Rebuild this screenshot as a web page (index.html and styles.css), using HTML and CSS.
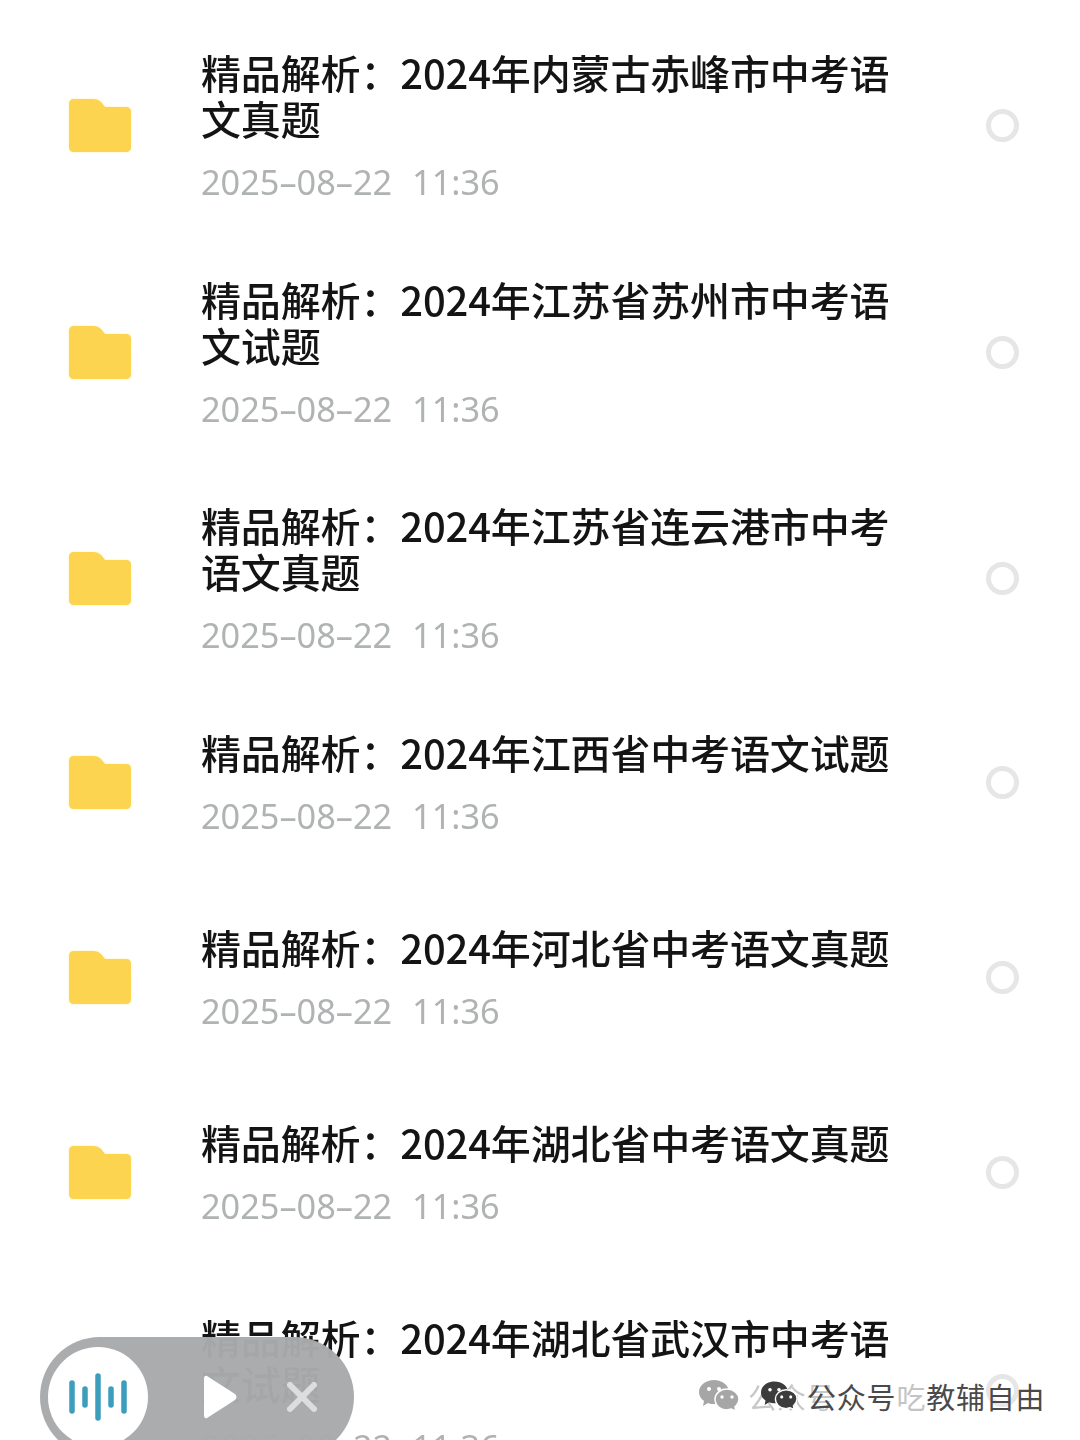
FILE: index.html
```html
<!DOCTYPE html>
<html lang="zh-CN">
<head>
  <meta charset="UTF-8">
  <title>文件列表</title>
  <link rel="stylesheet" href="styles.css">
</head>
<body>
  <svg class="defs" width="0" height="0" aria-hidden="true">
    <symbol id="folder" viewBox="0 0 62 53">
      <path d="M5 0H25Q29 0 32 3L36 8H57Q62 8 62 13V48Q62 53 57 53H5Q0 53 0 48V5Q0 0 5 0Z"/>
    </symbol>
    <symbol id="wechat" viewBox="0 0 40 32">
      <path class="bubble-back" d="M15 0C23 0 30 5 30 12C30 19 23 24 15 24C13 24 11 24 9 23L4 26L5 21C2 19 0 16 0 12C0 5 7 0 15 0Z"/>
      <path class="bubble-front" d="M28 9C35 9 40 14 40 19C40 22 38 25 36 27L37 31L32 29C31 29 29 30 28 30C21 30 16 25 16 19C16 14 21 9 28 9Z"/>
      <circle class="eye" cx="10" cy="9" r="2"/>
      <circle class="eye" cx="20" cy="9" r="2"/>
      <circle class="eye" cx="23" cy="17" r="1.7"/>
      <circle class="eye" cx="33" cy="17" r="1.7"/>
    </symbol>
  </svg>

  <main class="file-list">
    <div class="file-row">
      <svg class="folder-icon"><use href="#folder"/></svg>
      <div class="file-info">
        <div class="file-title">精品解析：2024年内蒙古赤峰市中考语文真题</div>
        <div class="file-date">2025–08–22  11:36</div>
      </div>
      <span class="radio"></span>
    </div>
    <div class="file-row">
      <svg class="folder-icon"><use href="#folder"/></svg>
      <div class="file-info">
        <div class="file-title">精品解析：2024年江苏省苏州市中考语文试题</div>
        <div class="file-date">2025–08–22  11:36</div>
      </div>
      <span class="radio"></span>
    </div>
    <div class="file-row">
      <svg class="folder-icon"><use href="#folder"/></svg>
      <div class="file-info">
        <div class="file-title">精品解析：2024年江苏省连云港市中考语文真题</div>
        <div class="file-date">2025–08–22  11:36</div>
      </div>
      <span class="radio"></span>
    </div>
    <div class="file-row single">
      <svg class="folder-icon"><use href="#folder"/></svg>
      <div class="file-info">
        <div class="file-title">精品解析：2024年江西省中考语文试题</div>
        <div class="file-date">2025–08–22  11:36</div>
      </div>
      <span class="radio"></span>
    </div>
    <div class="file-row single">
      <svg class="folder-icon"><use href="#folder"/></svg>
      <div class="file-info">
        <div class="file-title">精品解析：2024年河北省中考语文真题</div>
        <div class="file-date">2025–08–22  11:36</div>
      </div>
      <span class="radio"></span>
    </div>
    <div class="file-row single">
      <svg class="folder-icon"><use href="#folder"/></svg>
      <div class="file-info">
        <div class="file-title">精品解析：2024年湖北省中考语文真题</div>
        <div class="file-date">2025–08–22  11:36</div>
      </div>
      <span class="radio"></span>
    </div>
    <div class="file-row">
      <svg class="folder-icon"><use href="#folder"/></svg>
      <div class="file-info">
        <div class="file-title">精品解析：2024年湖北省武汉市中考语文试题</div>
        <div class="file-date">2025–08–22  11:36</div>
      </div>
      <span class="radio"></span>
    </div>
  </main>

  <!-- 悬浮播放器 -->
  <div class="player">
    <div class="player-disc">
      <svg class="wave" width="60" height="48" viewBox="0 0 60 48">
        <line x1="4" y1="10" x2="4" y2="38"/>
        <line x1="17" y1="16" x2="17" y2="32"/>
        <line x1="30" y1="3" x2="30" y2="45"/>
        <line x1="43" y1="16" x2="43" y2="32"/>
        <line x1="56" y1="10" x2="56" y2="38"/>
      </svg>
    </div>
    <svg class="play" width="33" height="44" viewBox="0 0 33 44">
      <path d="M3 1Q0 0 0 4V40Q0 44 3 43L31 25Q34 22 31 19Z"/>
    </svg>
    <svg class="close" width="30" height="30" viewBox="0 0 30 30">
      <line x1="3" y1="3" x2="27" y2="27"/>
      <line x1="27" y1="3" x2="3" y2="27"/>
    </svg>
  </div>

  <!-- 水印 -->
  <div class="watermark ghost">
    <svg class="wm-icon"><use href="#wechat"/></svg>
    <span class="ghost-text">公众号</span>
  </div>
  <div class="watermark main-mark">
    <svg class="wm-icon"><use href="#wechat"/></svg>
    <span>公众号<i class="faint">吃</i>教辅自由</span>
  </div>
</body>
</html>
```

FILE: styles.css
```css
* {
  box-sizing: border-box;
}

html, body {
  margin: 0;
  height: 1440px;
  overflow: hidden;
  background: #fff;
}

body {
  position: relative;
  font-family: "Noto Sans CJK SC", "Noto Sans", sans-serif;
}

.defs {
  position: absolute;
}

.file-list {
  padding: 49px 0 0 69px;
  filter: blur(0.5px);
}

.file-row {
  display: flex;
  align-items: center;
  margin-bottom: 73.67px;
}

.file-row.single {
  margin-bottom: 88px;
}

.folder-icon {
  flex: none;
  width: 62px;
  height: 53px;
  fill: #fdd44f;
  filter: drop-shadow(0 0 1px #fff0b0);
}

.file-info {
  flex: none;
  width: 700px;
  margin-left: 70px;
}

.file-title {
  font-size: 40px;
  font-weight: 500;
  line-height: 46px;
  letter-spacing: -0.15px;
  color: #141414;
}

.file-date {
  margin-top: 21px;
  font-family: "Noto Sans", sans-serif;
  font-size: 34.3px;
  line-height: 40px;
  word-spacing: 1px;
  color: #b0b3b3;
  white-space: pre;
}

.radio {
  flex: none;
  width: 33px;
  height: 33px;
  margin-left: 85px;
  border: 5px solid #e6e6e6;
  border-radius: 50%;
}

/* 播放器 */
.player {
  position: absolute;
  left: 40px;
  top: 1337px;
  width: 314px;
  height: 120px;
  display: flex;
  align-items: center;
  padding-left: 8px;
  border-radius: 60px;
  background: rgba(168, 170, 172, 0.975);
}

.player-disc {
  width: 100px;
  height: 100px;
  display: flex;
  align-items: center;
  justify-content: center;
  border-radius: 50%;
  background: #fff;
}

.wave line {
  stroke: #3d9dbd;
  stroke-width: 5.5;
  stroke-linecap: round;
}

.play {
  margin-left: 56px;
  fill: #fff;
}

.close {
  margin-left: 50px;
  stroke: #dcddde;
  stroke-width: 6;
  stroke-linecap: round;
}

/* 水印 */
.watermark {
  position: absolute;
  top: 1377px;
  display: flex;
  align-items: center;
  font-size: 29px;
  line-height: 38px;
  color: #4a4a4a;
  white-space: nowrap;
}

.main-mark {
  left: 761px;
  gap: 10px;
  letter-spacing: 0.8px;
}

.main-mark .wm-icon {
  width: 36px;
  height: 32px;
}

.watermark.ghost {
  left: 699px;
  gap: 9px;
}

.ghost .wm-icon {
  opacity: 0.45;
}

.ghost-text {
  opacity: 0.3;
}

.wm-icon {
  width: 40px;
  height: 32px;
}

.bubble-back,
.bubble-front {
  fill: #3c3c3c;
}

.bubble-front {
  stroke: #fff;
  stroke-width: 1.5;
}

.eye {
  fill: #fff;
}

.faint {
  font-style: normal;
  color: #c4c4c4;
}
```
